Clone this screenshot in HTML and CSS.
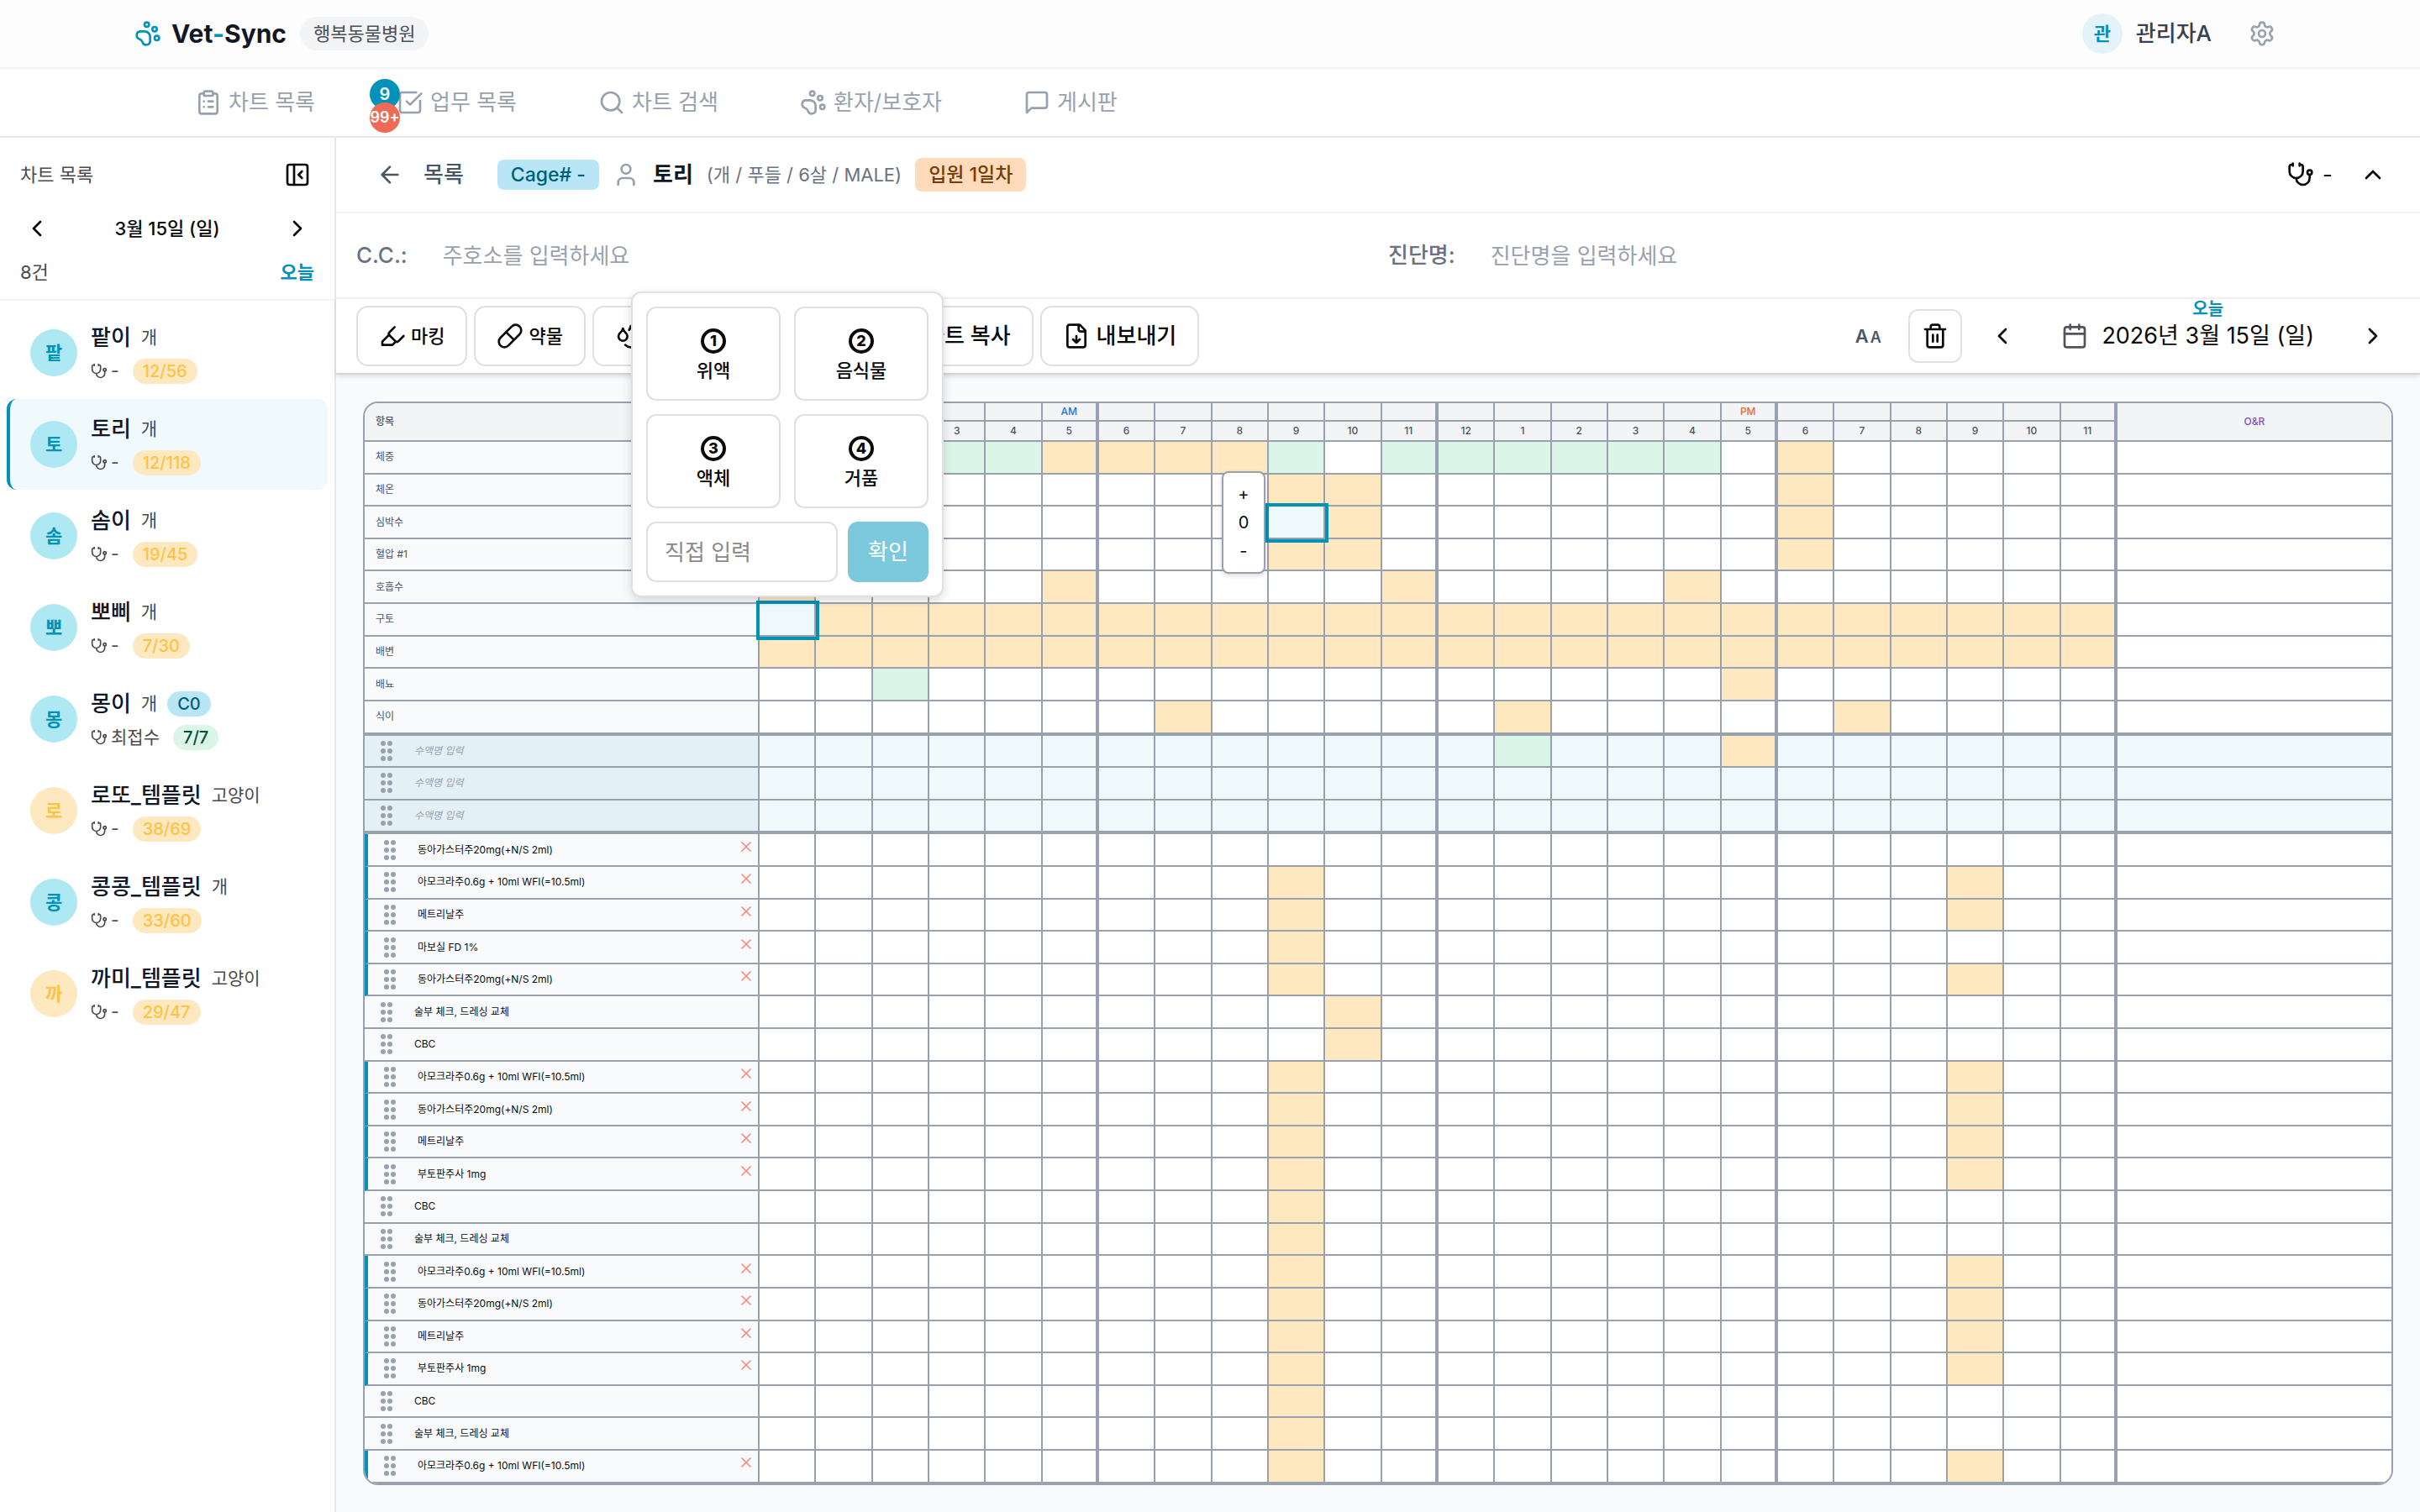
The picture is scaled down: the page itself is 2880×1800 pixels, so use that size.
FILE: index.html
```html
<!DOCTYPE html>
<html lang="ko">
<head>
    <meta charset="UTF-8">
    <meta name="viewport" content="width=device-width, initial-scale=1.0">
    <title>Vet-Sync</title>
    <link rel="stylesheet" href="styles.css">
</head>
<body>
    <svg class="sprite" aria-hidden="true">
        <symbol id="i-paw" viewBox="0 0 24 24"><circle cx="11" cy="4" r="2"/><circle cx="18" cy="8" r="2"/><circle cx="20" cy="16" r="2"/><path d="M9 10a5 5 0 0 1 5 5v3.5a3.5 3.5 0 0 1-6.84 1.045Q6.52 17.48 4.46 16.84A3.5 3.5 0 0 1 5.5 10Z"/></symbol>
        <symbol id="i-settings" viewBox="0 0 24 24"><path d="M9.671 4.136a2.34 2.34 0 0 1 4.659 0 2.34 2.34 0 0 0 3.319 1.915 2.34 2.34 0 0 1 2.33 4.033 2.34 2.34 0 0 0 0 3.831 2.34 2.34 0 0 1-2.33 4.033 2.34 2.34 0 0 0-3.319 1.915 2.34 2.34 0 0 1-4.659 0 2.34 2.34 0 0 0-3.32-1.915 2.34 2.34 0 0 1-2.33-4.033 2.34 2.34 0 0 0 0-3.831A2.34 2.34 0 0 1 6.35 6.051a2.34 2.34 0 0 0 3.319-1.915"/><circle cx="12" cy="12" r="3"/></symbol>
        <symbol id="i-clipboard" viewBox="0 0 24 24"><rect x="8" y="2" width="8" height="4" rx="1"/><path d="M16 4h2a2 2 0 0 1 2 2v14a2 2 0 0 1-2 2H6a2 2 0 0 1-2-2V6a2 2 0 0 1 2-2h2M12 11h4M12 16h4M8 11h.01M8 16h.01"/></symbol>
        <symbol id="i-check" viewBox="0 0 24 24"><path d="M21 10.5V19a2 2 0 0 1-2 2H5a2 2 0 0 1-2-2V5a2 2 0 0 1 2-2h12.5M9 11l3 3L22 4"/></symbol>
        <symbol id="i-search" viewBox="0 0 24 24"><circle cx="11" cy="11" r="8"/><path d="m21 21-4.3-4.3"/></symbol>
        <symbol id="i-message" viewBox="0 0 24 24"><path d="M21 15a2 2 0 0 1-2 2H7l-4 4V5a2 2 0 0 1 2-2h14a2 2 0 0 1 2 2z"/></symbol>
        <symbol id="i-panel" viewBox="0 0 24 24"><rect x="3" y="3" width="18" height="18" rx="2"/><path d="M9 3v18M16 15l-3-3 3-3"/></symbol>
        <symbol id="i-left" viewBox="0 0 24 24"><path d="m15 18-6-6 6-6"/></symbol>
        <symbol id="i-right" viewBox="0 0 24 24"><path d="m9 18 6-6-6-6"/></symbol>
        <symbol id="i-up" viewBox="0 0 24 24"><path d="m18 15-6-6-6 6"/></symbol>
        <symbol id="i-back" viewBox="0 0 24 24"><path d="m12 19-7-7 7-7M19 12H5"/></symbol>
        <symbol id="i-user" viewBox="0 0 24 24"><path d="M19 21v-2a4 4 0 0 0-4-4H9a4 4 0 0 0-4 4v2"/><circle cx="12" cy="7" r="4"/></symbol>
        <symbol id="i-steth" viewBox="0 0 24 24"><path d="M11 2v2M5 2v2M5 3H4a2 2 0 0 0-2 2v4a6 6 0 0 0 12 0V5a2 2 0 0 0-2-2h-1M8 15a6 6 0 0 0 12 0v-3"/><circle cx="20" cy="10" r="2"/></symbol>
        <symbol id="i-marker" viewBox="0 0 24 24"><path d="m9 11-6 6v3h9l3-3"/><path d="m22 12-4.6 4.6a2 2 0 0 1-2.8 0l-5.2-5.2a2 2 0 0 1 0-2.8L14 4"/></symbol>
        <symbol id="i-pill" viewBox="0 0 24 24"><path d="m10.5 20.5 10-10a4.95 4.95 0 1 0-7-7l-10 10a4.95 4.95 0 1 0 7 7ZM8.5 8.5l7 7"/></symbol>
        <symbol id="i-drops" viewBox="0 0 24 24"><path d="M7 16.3c2.2 0 4-1.83 4-4.05 0-1.16-.57-2.26-1.71-3.19S7.29 6.75 7 5.3c-.29 1.45-1.14 2.84-2.29 3.76S3 11.1 3 12.25c0 2.22 1.8 4.05 4 4.05z"/><path d="M12.56 6.6A10.97 10.97 0 0 0 14 3.02c.5 2.5 2 4.9 4 6.5s3 3.5 3 5.5a6.98 6.98 0 0 1-11.91 4.97"/></symbol>
        <symbol id="i-download" viewBox="0 0 24 24"><path d="M15 2H6a2 2 0 0 0-2 2v16a2 2 0 0 0 2 2h12a2 2 0 0 0 2-2V7ZM14 2v4a2 2 0 0 0 2 2h4M12 18v-6M9 15l3 3 3-3"/></symbol>
        <symbol id="i-trash" viewBox="0 0 24 24"><path d="M10 11v6M14 11v6M19 6v14a2 2 0 0 1-2 2H7a2 2 0 0 1-2-2V6M3 6h18M8 6V4a2 2 0 0 1 2-2h4a2 2 0 0 1 2 2v2"/></symbol>
        <symbol id="i-calendar" viewBox="0 0 24 24"><path d="M8 2v4M16 2v4M3 10h18"/><rect x="3" y="4" width="18" height="18" rx="2"/></symbol>
        <symbol id="i-x" viewBox="0 0 24 24"><path d="M18 6 6 18M6 6l12 12"/></symbol>
        <symbol id="i-grip" viewBox="0 0 14 24"><circle cx="3" cy="3" r="3"/><circle cx="11" cy="3" r="3"/><circle cx="3" cy="12" r="3"/><circle cx="11" cy="12" r="3"/><circle cx="3" cy="21" r="3"/><circle cx="11" cy="21" r="3"/></symbol>
    </svg>

    <header class="topbar">
        <a class="logo" href="#">
            <svg class="icon"><use href="#i-paw"/></svg>
            <span>Vet<em>-</em>Sync</span>
        </a>
        <span class="hospital">행복동물병원</span>
        <span class="user-avatar">관</span>
        <span class="user-name">관리자A</span>
        <button class="settings" aria-label="설정"><svg class="icon"><use href="#i-settings"/></svg></button>
    </header>

    <nav class="nav">
        <a href="#"><svg class="icon"><use href="#i-clipboard"/></svg>차트 목록</a>
        <a href="#"><svg class="icon"><use href="#i-check"/></svg>업무 목록
            <span class="counts"><span class="count">9</span><span class="count late">99+</span></span></a>
        <a href="#"><svg class="icon"><use href="#i-search"/></svg>차트 검색</a>
        <a href="#"><svg class="icon"><use href="#i-paw"/></svg>환자/보호자</a>
        <a href="#"><svg class="icon"><use href="#i-message"/></svg>게시판</a>
    </nav>

    <div class="layout">
        <aside class="sidebar">
            <div class="side-title">
                <span>차트 목록</span>
                <button aria-label="접기"><svg class="icon"><use href="#i-panel"/></svg></button>
            </div>
            <div class="side-date">
                <button aria-label="이전"><svg class="icon"><use href="#i-left"/></svg></button>
                <span>3월 15일 (일)</span>
                <button aria-label="다음"><svg class="icon"><use href="#i-right"/></svg></button>
            </div>
            <div class="side-count">
                <span>8건</span>
                <button class="today">오늘</button>
            </div>
            <ul class="patients" id="patients"></ul>
        </aside>

        <main class="main">
            <div class="detail">
                <button class="back"><svg class="icon"><use href="#i-back"/></svg>목록</button>
                <span class="tag cage">Cage# -</span>
                <svg class="icon muted"><use href="#i-user"/></svg>
                <strong class="pet">토리</strong>
                <span class="pet-info">(개 / 푸들 / 6살 / MALE)</span>
                <span class="tag days">입원 1일차</span>
                <span class="vet"><svg class="icon"><use href="#i-steth"/></svg>-</span>
                <button class="square" aria-label="접기"><svg class="icon"><use href="#i-up"/></svg></button>
            </div>

            <div class="notes">
                <div class="note">
                    <label for="cc">C.C.:</label>
                    <input type="text" id="cc" placeholder="주호소를 입력하세요">
                </div>
                <div class="note">
                    <label for="dx">진단명:</label>
                    <input type="text" id="dx" placeholder="진단명을 입력하세요">
                </div>
            </div>

            <div class="toolbar">
                <button class="tool"><svg class="icon"><use href="#i-marker"/></svg>마킹</button>
                <button class="tool"><svg class="icon"><use href="#i-pill"/></svg>약물</button>
                <button class="tool wide" aria-label="수액"><svg class="icon"><use href="#i-drops"/></svg></button>
                <button class="tool large">차트 복사</button>
                <button class="tool large"><svg class="icon"><use href="#i-download"/></svg>내보내기</button>
                <div class="tool-right">
                    <button class="square font-size" aria-label="글자 크기"><b>A</b><small>A</small></button>
                    <button class="square bordered" aria-label="삭제"><svg class="icon"><use href="#i-trash"/></svg></button>
                    <button class="square" aria-label="이전 날"><svg class="icon"><use href="#i-left"/></svg></button>
                    <button class="date-btn">
                        <svg class="icon"><use href="#i-calendar"/></svg>
                        <span class="date-text">2026년 3월 15일 (일)<span class="date-today">오늘</span></span>
                    </button>
                    <button class="square" aria-label="다음 날"><svg class="icon"><use href="#i-right"/></svg></button>
                </div>
            </div>

            <div class="chart-area">
                <div class="chart">
                    <table>
                        <colgroup id="cols"></colgroup>
                        <thead id="head"></thead>
                        <tbody id="body"></tbody>
                    </table>
                </div>
            </div>

            <!-- vomit type picker -->
            <div class="popup">
                <button class="choice"><span class="num">1</span>위액</button>
                <button class="choice"><span class="num">2</span>음식물</button>
                <button class="choice"><span class="num">3</span>액체</button>
                <button class="choice"><span class="num">4</span>거품</button>
                <form class="custom">
                    <input type="text" placeholder="직접 입력" aria-label="직접 입력">
                    <button type="button">확인</button>
                </form>
            </div>
        </main>
    </div>

    <script src="chart.js"></script>
</body>
</html>
```

FILE: chart.js
```js
function icon(name, cls) {
    return '<svg class="icon ' + (cls || '') + '"><use href="#i-' + name + '"/></svg>';
}

// name, species, vet, progress, cage
var patients = [
    ['팥이', '개', '-', '12/56'],
    ['토리', '개', '-', '12/118'],
    ['솜이', '개', '-', '19/45'],
    ['뽀삐', '개', '-', '7/30'],
    ['몽이', '개', '최접수', '7/7', 'C0'],
    ['로또_템플릿', '고양이', '-', '38/69'],
    ['콩콩_템플릿', '개', '-', '33/60'],
    ['까미_템플릿', '고양이', '-', '29/47']
];

document.getElementById('patients').innerHTML = patients.map(function (p, i) {
    var parts = p[3].split('/');
    return '<li class="patient' + (i === 1 ? ' selected' : '') + '">' +
        '<span class="avatar' + (p[1] === '고양이' ? ' cat' : '') + '">' + p[0][0] + '</span>' +
        '<div class="patient-info"><div class="line"><strong>' + p[0] + '</strong><span>' + p[1] + '</span>' +
        (p[4] ? '<span class="pill blue">' + p[4] + '</span>' : '') + '</div>' +
        '<div class="line vet-line"><span class="who">' + icon('steth', 'small') + p[2] + '</span>' +
        '<span class="pill' + (parts[0] === parts[1] ? ' green' : '') + '">' + p[3] + '</span></div></div></li>';
}).join('');

function range(a, b) {
    var out = [];
    for (var i = a; i <= b; i++) out.push(i);
    return out;
}

var DONGA = '동아가스터주20mg(+N/S 2ml)';
var AMO = '아모크라주0.6g + 10ml WFI(=10.5ml)';
var METRI = '메트리날주';
var BUTO = '부토판주사 1mg';
var DRESS = '술부 체크, 드레싱 교체';

// type, label, todo hours, done hours, active hour
var rows = [
    ['vital', '체중', [5, 6, 7, 8, 18], range(0, 4).concat([9], range(11, 16))],
    ['vital', '체온', [9, 10, 18]],
    ['vital', '심박수', [10, 18], [], 9],
    ['vital', '혈압 #1', [9, 10, 18]],
    ['vital', '호흡수', [0, 5, 11, 16]],
    ['vital', '구토', range(1, 23), [], 0],
    ['vital', '배변', range(0, 23)],
    ['vital', '배뇨', [17], [2]],
    ['vital last', '식이', [7, 13, 19]],
    ['fluid', '', [17], [13]],
    ['fluid', '', []],
    ['fluid last', '', []],
    ['med', DONGA, []],
    ['med', AMO, [9, 21]],
    ['med', METRI, [9, 21]],
    ['med', '마보실 FD 1%', [9]],
    ['med', DONGA, [9, 21]],
    ['task', DRESS, [10]],
    ['task', 'CBC', [10]],
    ['med', AMO, [9, 21]],
    ['med', DONGA, [9, 21]],
    ['med', METRI, [9, 21]],
    ['med', BUTO, [9, 21]],
    ['task', 'CBC', [9]],
    ['task', DRESS, [9]],
    ['med', AMO, [9, 21]],
    ['med', DONGA, [9, 21]],
    ['med', METRI, [9, 21]],
    ['med', BUTO, [9, 21]],
    ['task', 'CBC', [9]],
    ['task', DRESS, [9]],
    ['med', AMO, [9, 21]]
];

var hours = range(0, 23);

document.getElementById('cols').innerHTML =
    '<col class="col-label">' + hours.map(function () { return '<col>'; }).join('') + '<col class="col-or">';

document.getElementById('head').innerHTML =
    '<tr class="h1"><th class="label" rowspan="2">항목</th>' + hours.map(function (h) {
        return '<th class="' + (h === 5 ? 'am' : h === 17 ? 'pm' : '') + '">' + (h === 5 ? 'AM' : h === 17 ? 'PM' : '') + '</th>';
    }).join('') + '<th class="or" rowspan="2">O&amp;R</th></tr>' +
    '<tr class="h2">' + hours.map(function (h) {
        return '<th>' + (h % 12 || 12) + '</th>';
    }).join('') + '</tr>';

function labelHtml(type, text) {
    if (type === 'vital') return text;
    if (type === 'fluid') text = '<input type="text" placeholder="수액명 입력" aria-label="수액명 입력">';
    return '<div class="item">' + icon('grip', 'grip') + '<span class="item-name">' + text + '</span>' +
        (type === 'med' ? '<button class="remove" aria-label="삭제">' + icon('x') + '</button>' : '') + '</div>';
}

document.getElementById('body').innerHTML = rows.map(function (r) {
    var cells = hours.map(function (h) {
        if (r[4] === h) {
            return '<td class="active"><input type="text" aria-label="' + r[1] + '">' +
                (h === 9 ? '<div class="stepper"><button>+</button><span>0</span><button>-</button></div>' : '') + '</td>';
        }
        var cls = r[2].indexOf(h) >= 0 ? 'todo' : (r[3] || []).indexOf(h) >= 0 ? 'done' : '';
        return '<td class="' + cls + '"></td>';
    }).join('');
    return '<tr class="' + r[0] + '"><th class="label">' + labelHtml(r[0].split(' ')[0], r[1]) + '</th>' + cells + '<td class="or"></td></tr>';
}).join('');
```

FILE: styles.css
```css
* {
    box-sizing: border-box;
}

body {
    margin: 0;
    height: 100vh;
    display: flex;
    flex-direction: column;
    font-family: Inter, "Noto Sans CJK KR", sans-serif;
    font-size: 26px;
    line-height: 32px;
    color: #0a0a0a;
    background: #fff;
}

button, input {
    font: inherit;
    color: inherit;
    border: 0;
    padding: 0;
    background: none;
}

button {
    display: flex;
    align-items: center;
    justify-content: center;
    cursor: pointer;
}

input {
    min-width: 0;
    outline: none;
}

a {
    color: inherit;
    text-decoration: none;
}

.sprite {
    display: none;
}

.icon {
    width: 32px;
    height: 32px;
    flex: none;
    fill: none;
    stroke: currentColor;
    stroke-width: 2;
    stroke-linecap: round;
    stroke-linejoin: round;
}

.icon.small {
    width: 20px;
    height: 20px;
}

.icon.muted {
    color: #99a1af;
}

/* top bar */
.topbar {
    height: 82px;
    display: flex;
    align-items: center;
    padding: 0 160px;
    background: #fdfdfd;
    border-bottom: 2px solid #f3f4f6;
}

.logo {
    display: flex;
    align-items: center;
    gap: 12px;
    font-size: 30px;
    font-weight: 700;
    color: #101828;
}

.logo .icon {
    color: #0092b8;
}

.logo em {
    font-style: normal;
    color: #0092b8;
}

.hospital {
    height: 40px;
    margin-left: 16px;
    padding: 4px 16px;
    border-radius: 20px;
    font-size: 22px;
    color: #4a4f58;
    background: #f3f4f6;
}

.user-avatar {
    width: 48px;
    height: 48px;
    margin-left: auto;
    border-radius: 50%;
    font-size: 22px;
    font-weight: 700;
    line-height: 48px;
    text-align: center;
    color: #0092b8;
    background: #e3f3f8;
}

.user-name {
    margin: 0 32px 0 16px;
    font-weight: 500;
    color: #364153;
}

.settings {
    width: 56px;
    height: 56px;
    color: #99a1af;
}

/* nav */
.nav {
    height: 82px;
    display: flex;
    align-items: center;
    gap: 97px;
    padding: 0 232px;
    color: #99a1af;
    border-bottom: 2px solid #e5e7eb;
}

.nav a {
    position: relative;
    display: flex;
    align-items: center;
    gap: 8px;
}

.counts {
    position: absolute;
    left: -32px;
    top: -12px;
}

.count {
    display: flex;
    align-items: center;
    justify-content: center;
    width: 36px;
    height: 36px;
    margin-bottom: -8px;
    border-radius: 50%;
    font-size: 20px;
    font-weight: 600;
    color: #fff;
    background: #0092b8;
}

.count.late {
    background: #ef6a56;
    font-size: 18px;
}

.layout {
    flex: 1;
    min-height: 0;
    display: flex;
}

/* sidebar */
.sidebar {
    width: 400px;
    flex: none;
    font-size: 22px;
    border-right: 2px solid #e5e7eb;
}

.side-title, .side-date, .side-count {
    display: flex;
    align-items: center;
    justify-content: space-between;
    padding: 0 24px;
}

.side-title {
    height: 88px;
    padding-right: 28px;
    color: #4a4a4f;
}

.side-title button {
    color: #0a0a0a;
}

.side-date {
    height: 40px;
    padding: 0 28px;
    font-weight: 500;
}

.side-count {
    height: 66px;
    color: #4a4a4f;
    border-bottom: 2px solid #f3f4f6;
}

.today {
    font-weight: 700;
    color: #0092b8;
}

.patients {
    display: flex;
    flex-direction: column;
    gap: 1px;
    margin: 0;
    padding: 8px;
    list-style: none;
}

.patient {
    display: flex;
    align-items: center;
    gap: 16px;
    height: 108px;
    padding-left: 24px;
    border-left: 4px solid transparent;
    border-radius: 12px;
}

.patient.selected {
    border-left-color: #0092b8;
    background: #f0f9fb;
}

.avatar {
    width: 56px;
    height: 56px;
    border-radius: 50%;
    font-weight: 700;
    line-height: 56px;
    text-align: center;
    color: #0092b8;
    background: #aee9f3;
}

.avatar.cat {
    color: #fdc344;
    background: #fee8bf;
}

.patient-info {
    padding-top: 4px;
}

.line {
    display: flex;
    align-items: center;
    gap: 12px;
    height: 40px;
    font-size: 21px;
    color: #4a4a4f;
}

.line strong {
    font-size: 26px;
    font-weight: 500;
    color: #101828;
}

.vet-line {
    gap: 16px;
}

.who {
    display: flex;
    align-items: center;
    gap: 4px;
}

.pill {
    height: 30px;
    padding: 0 12px;
    border-radius: 15px;
    font-size: 20px;
    font-weight: 500;
    line-height: 30px;
    color: #fdc344;
    background: #fee8bf;
}

.pill.blue {
    color: #005f78;
    background: #b8e6f6;
}

.pill.green {
    color: #004f3b;
    background: #dbf5e9;
}

/* chart header */
.main {
    position: relative;
    flex: 1;
    min-width: 0;
    display: flex;
    flex-direction: column;
}

.detail {
    display: flex;
    align-items: center;
    gap: 16px;
    height: 90px;
    padding: 0 24px 0 48px;
    border-bottom: 2px solid #f3f4f6;
}

.back {
    gap: 24px;
    margin-right: 24px;
    font-weight: 500;
    color: #4a5565;
}

.tag {
    padding: 2px 16px;
    border-radius: 8px;
    font-size: 23px;
    font-weight: 500;
}

.tag.cage {
    color: #005f78;
    background: #b8e6f6;
}

.tag.days {
    padding: 4px 16px;
    color: #733e0a;
    background: #ffdbbb;
}

.pet {
    font-weight: 600;
    color: #101828;
}

.pet-info {
    font-size: 22px;
    color: #6a7282;
}

.vet {
    display: flex;
    align-items: center;
    gap: 10px;
    margin-left: auto;
}

.square {
    width: 64px;
    height: 64px;
}

.square.bordered {
    border: 2px solid #e0e0e0;
    border-radius: 12px;
}

.notes {
    display: grid;
    grid-template-columns: 1fr 1fr;
    gap: 24px;
    height: 102px;
    padding: 0 24px;
    border-bottom: 2px solid #f3f4f6;
}

.note {
    display: flex;
    align-items: center;
    gap: 18px;
}

.note label {
    font-weight: 500;
    color: #6a7282;
}

.note input {
    flex: 1;
    height: 64px;
    padding: 0 24px;
}

.note input::placeholder {
    color: #99a1af;
}

/* toolbar */
.toolbar {
    position: relative;
    display: flex;
    align-items: center;
    gap: 8px;
    height: 90px;
    padding: 0 24px;
    background: #fff;
    border-bottom: 2px solid #d1d5dc;
    box-shadow: 0 2px 6px rgba(0, 0, 0, 0.12);
}

.tool {
    gap: 6px;
    height: 72px;
    padding: 0 25px;
    border: 2px solid #e0e0e0;
    border-radius: 14px;
    font-size: 22px;
    font-weight: 500;
}

.tool.wide {
    width: 360px;
    justify-content: flex-start;
}

.tool.large {
    gap: 8px;
    font-size: 26px;
}

.tool-right {
    display: flex;
    align-items: center;
    gap: 16px;
    margin-left: auto;
}

.font-size {
    align-items: baseline;
    gap: 2px;
    line-height: 64px;
    color: #4a5565;
}

.font-size b {
    font-size: 22px;
    font-weight: 600;
}

.font-size small {
    font-size: 18px;
    font-weight: 600;
}

.date-btn {
    gap: 16px;
    padding: 0 22px;
    font-size: 27px;
}

.date-btn .icon {
    color: #52525b;
}

.date-text {
    position: relative;
}

.date-today {
    position: absolute;
    left: 0;
    right: 0;
    bottom: 38px;
    font-size: 20px;
    font-weight: 700;
    line-height: 20px;
    color: #0092b8;
}

/* chart table */
.chart-area {
    flex: 1;
    min-height: 0;
    padding: 32px;
    background: #f9fafc;
}

.chart {
    height: 100%;
    border: 2px solid #99a1af;
    border-radius: 18px;
    overflow: hidden;
}

table {
    width: 100%;
    height: 100%;
    table-layout: fixed;
    border-collapse: separate;
    border-spacing: 0;
    font-size: 12px;
    line-height: 16px;
}

.col-label {
    width: 470px;
}

.col-or {
    width: 326px;
}

th, td {
    padding: 0;
    border-right: 2px solid #99a1af;
    border-bottom: 2px solid #99a1af;
    background: #fff;
}

th {
    font-weight: 500;
    color: #4a5565;
}

thead th {
    background: #f3f4f6;
}

.h1 {
    height: 22px;
}

.h2 {
    height: 24px;
}

tbody tr {
    height: 38px;
}

tbody .last {
    height: 40px;
}

.am {
    color: #1c75d0;
}

.pm {
    color: #f0682a;
}

tr > .or {
    border-right: 0;
    color: #7f50c0;
}

.h1 th:nth-child(6n+1):not(.label),
.h2 th:nth-child(6n),
tbody td:nth-child(6n+1) {
    border-right-width: 4px;
}

.label {
    padding-left: 13px;
    text-align: left;
}

tbody .label {
    font-weight: 400;
    background: #f9fafc;
}

.last > * {
    border-bottom-width: 4px;
}

.fluid td {
    background: #eff8fa;
}

.fluid .label {
    background: #e3f1f6;
}

.med .label {
    border-left: 4px solid #0092b8;
}

tbody .todo {
    background: #fee8bf;
}

tbody .done {
    background: #dbf5e9;
}

.item {
    display: flex;
    align-items: center;
    padding-left: 6px;
    color: #0a0a0a;
}

.icon.grip {
    width: 14px;
    height: 24px;
    margin-right: 26px;
    fill: #99a1af;
    stroke: none;
}

.item-name {
    flex: 1;
}

.item-name input {
    font-style: italic;
}

.item-name input::placeholder {
    color: #99a1af;
}

.remove {
    padding: 0 4px 8px 0;
    color: #f58b80;
}

.remove .icon {
    width: 20px;
    height: 20px;
}

.active {
    position: relative;
    background: #eef9fc;
    box-shadow: 0 0 0 4px #0092b8;
}

.active input {
    display: block;
    width: 100%;
    height: 20px;
    text-align: center;
}

.stepper {
    position: absolute;
    right: 100%;
    top: 50%;
    width: 52px;
    margin-right: 4px;
    transform: translateY(-50%);
    padding: 8px 0;
    display: flex;
    flex-direction: column;
    align-items: stretch;
    font-size: 20px;
    line-height: 34px;
    text-align: center;
    background: #fff;
    border: 2px solid #99a1af;
    border-radius: 8px;
    box-shadow: 0 2px 6px rgba(0, 0, 0, 0.15);
}

/* popup */
.popup {
    position: absolute;
    left: 351px;
    top: 183px;
    width: 372px;
    display: grid;
    grid-template-columns: 1fr 1fr;
    gap: 16px;
    padding: 16px;
    background: #fff;
    border: 2px solid #e0e0e0;
    border-radius: 12px;
    box-shadow: 0 4px 12px rgba(0, 0, 0, 0.15);
}

.choice {
    flex-direction: column;
    gap: 4px;
    height: 112px;
    padding-top: 6px;
    border: 2px solid #e0e0e0;
    border-radius: 12px;
    font-size: 22px;
    font-weight: 500;
}

.num {
    width: 30px;
    height: 30px;
    border: 4px solid #0a0a0a;
    border-radius: 50%;
    font-size: 18px;
    font-weight: 800;
    line-height: 22px;
}

.custom {
    grid-column: span 2;
    display: flex;
    gap: 12px;
}

.custom input {
    flex: 1;
    height: 72px;
    padding: 0 20px;
    border: 2px solid #e0e0e0;
    border-radius: 12px;
}

.custom input::placeholder {
    color: #8a8a8a;
}

.custom button {
    width: 96px;
    border-radius: 12px;
    color: #fff;
    background: #7cc8dc;
}
```
